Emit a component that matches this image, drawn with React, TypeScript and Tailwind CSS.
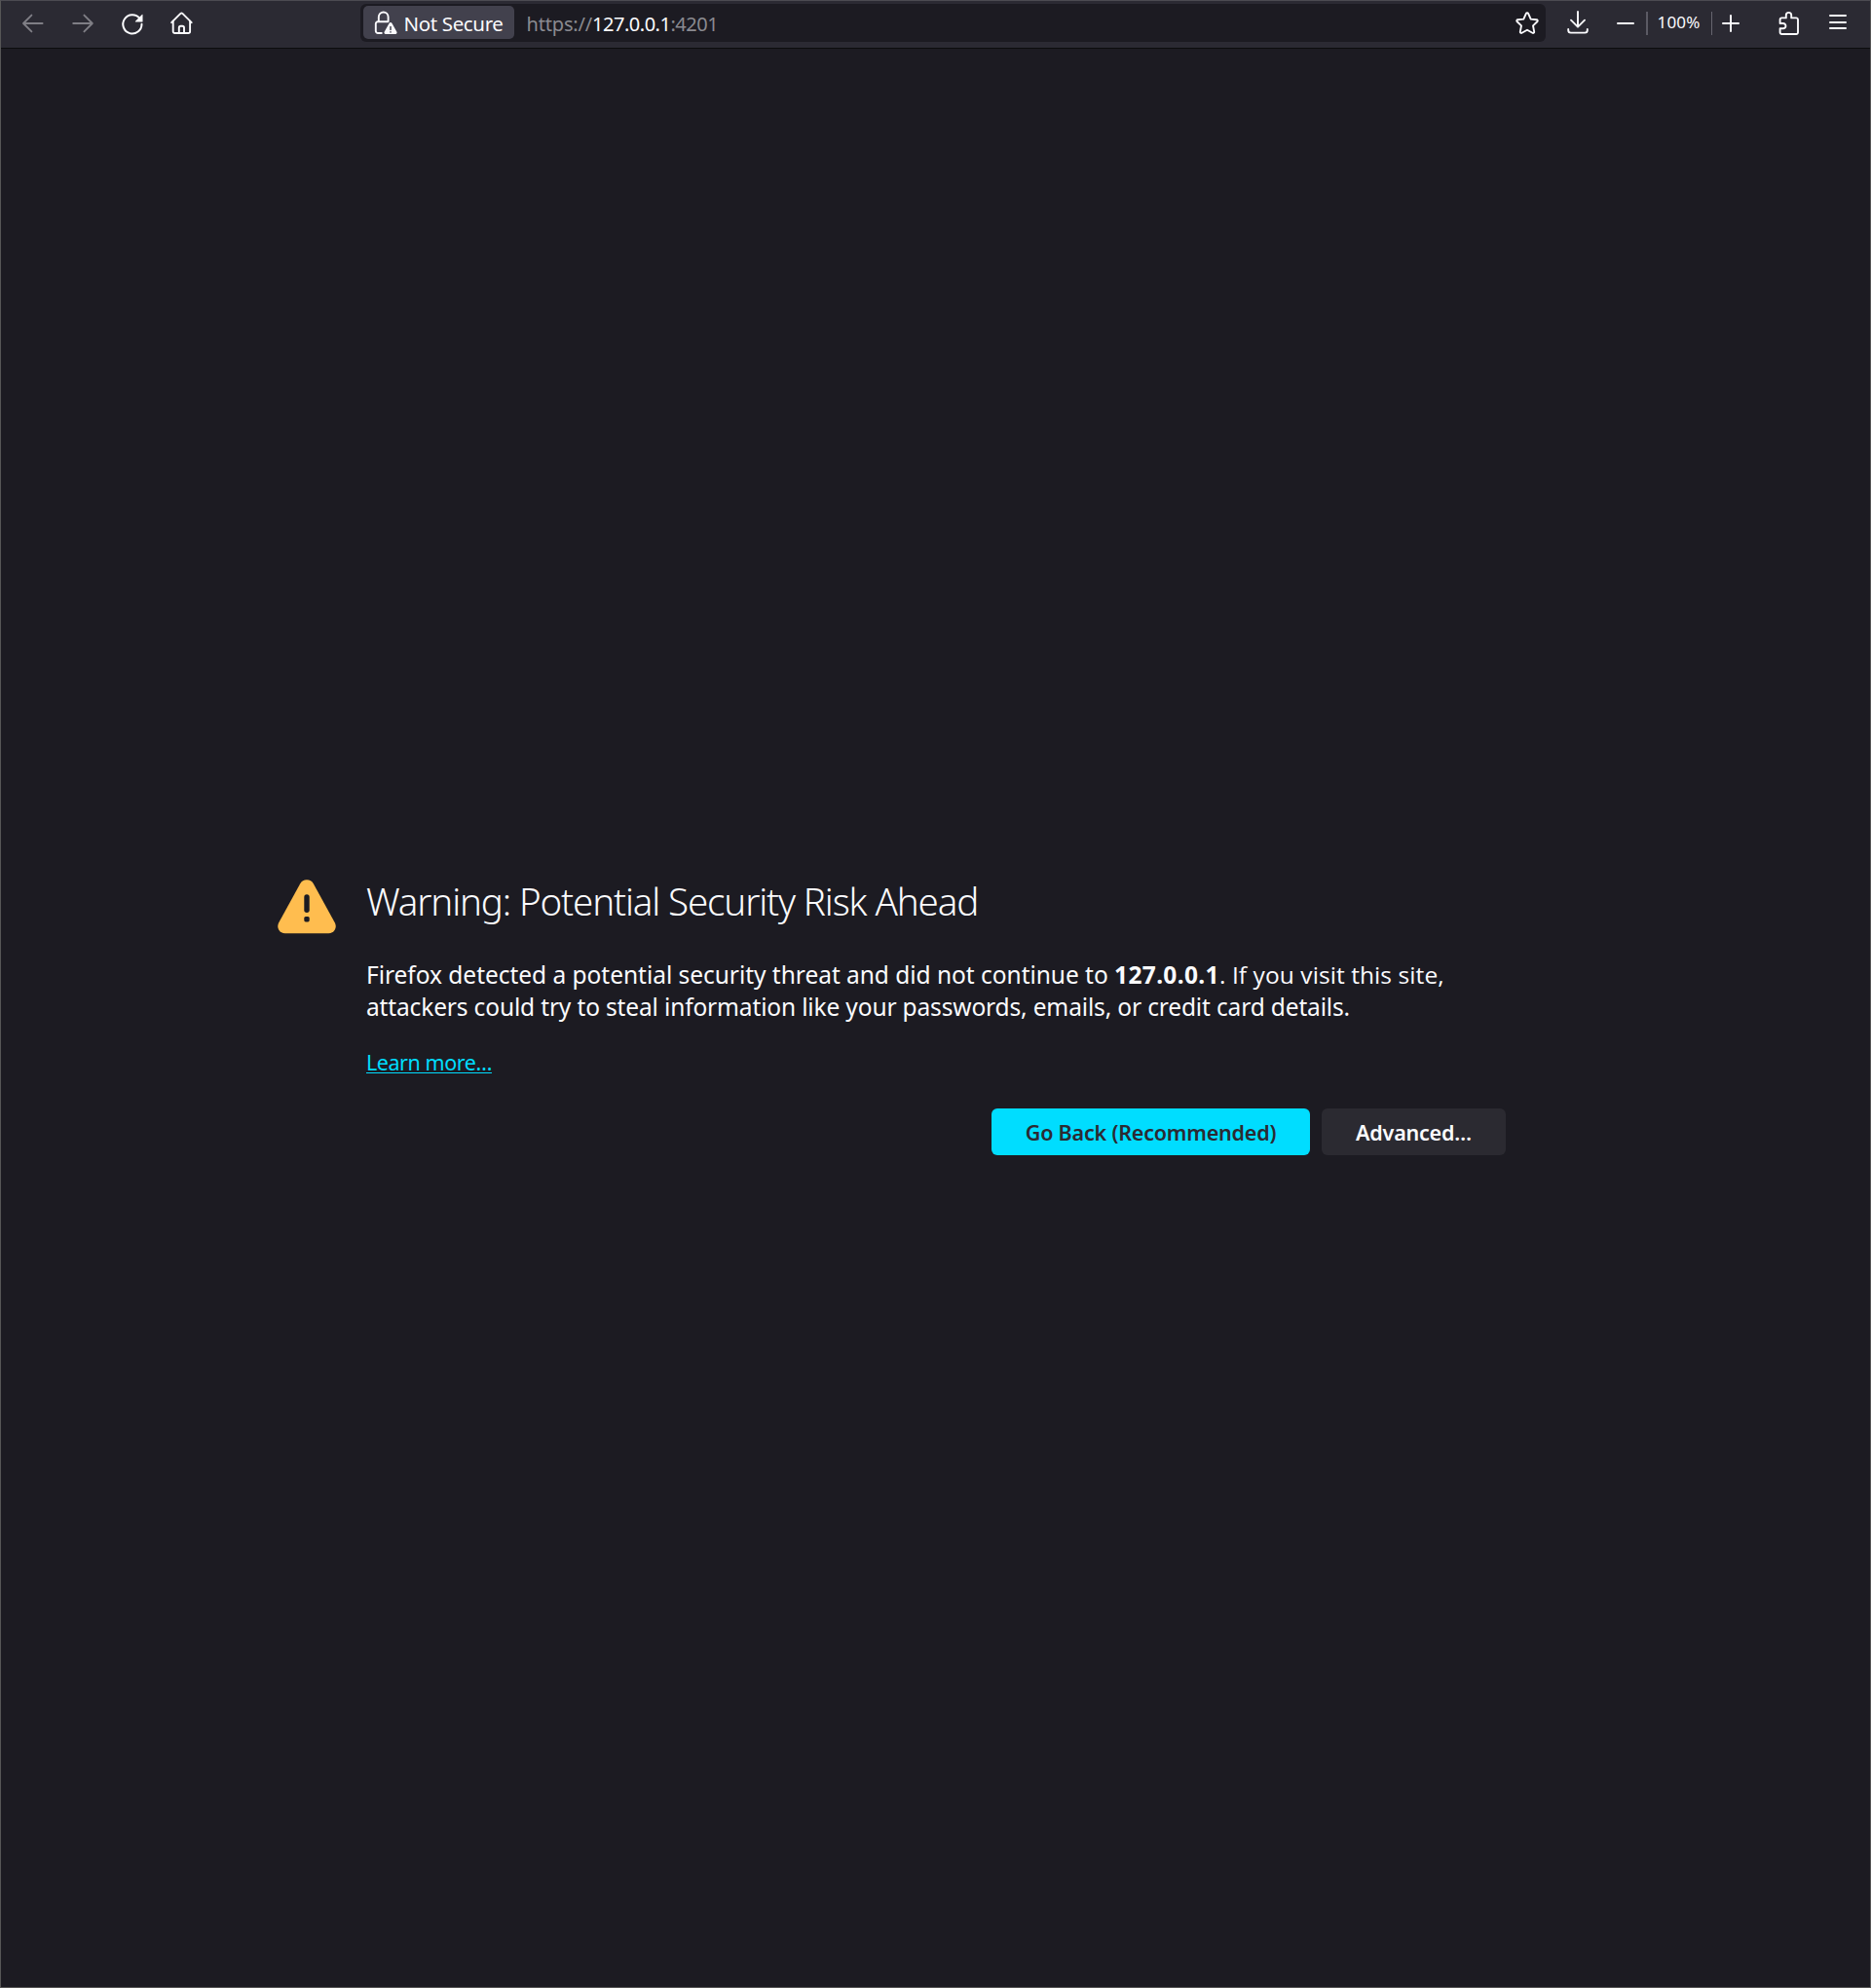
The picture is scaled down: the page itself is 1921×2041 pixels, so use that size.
import type { ReactNode } from "react";

function Icon({ children, className = "" }: { children: ReactNode; className?: string }) {
  return (
    <svg
      viewBox="0 0 24 24"
      className={`size-6 shrink-0 overflow-visible ${className}`}
      fill="none"
      stroke="currentColor"
      strokeWidth={1.9}
      strokeLinecap="round"
      strokeLinejoin="round"
    >
      {children}
    </svg>
  );
}

function BackIcon() {
  return (
    <Icon className="text-[#7f7e85]">
      <path d="M21.6 12H2.2M10.4 3.6 2 12l8.4 8.4" />
    </Icon>
  );
}

function ForwardIcon() {
  return (
    <Icon className="text-[#7f7e85]">
      <path d="M2.2 12h19.4M13.4 3.6l8.4 8.4-8.4 8.4" />
    </Icon>
  );
}

function ReloadIcon() {
  return (
    <Icon>
      <path d="M19.4 6.9A9.6 9.6 0 1 0 21.5 12.8" strokeWidth={2} />
      <path d="M22.5 3.2v6.7a.5.5 0 0 1-.5.5h-6.7a.4.4 0 0 1-.3-.7l6.8-6.8a.4.4 0 0 1 .7.3z" fill="currentColor" stroke="none" />
    </Icon>
  );
}

function HomeIcon() {
  return (
    <Icon>
      <path d="M1.1 11.2 10.4 1.9a1.45 1.45 0 0 1 2 0l9.3 9.3" />
      <path d="M2.7 9.8v10.4A1.8 1.8 0 0 0 4.5 22h13.8a1.8 1.8 0 0 0 1.8-1.8V9.8" />
      <path d="M8.8 21.8v-5.2a1.8 1.8 0 0 1 1.8-1.8h1.6a1.8 1.8 0 0 1 1.8 1.8v5.2" />
    </Icon>
  );
}

function InsecureLockIcon() {
  return (
    <Icon>
      <path d="M4.8 11V6.4a4.9 4.9 0 0 1 9.8 0V11" />
      <path d="M7.8 23H4a2.2 2.2 0 0 1-2.2-2.2v-7.3A2.2 2.2 0 0 1 4 11.3h10.2" />
      <path
        d="M15.5 12.9a1.7 1.7 0 0 1 3 0l4.9 8.9a1.5 1.5 0 0 1-1.3 2.2H11.9a1.5 1.5 0 0 1-1.3-2.2z"
        fill="currentColor"
        stroke="none"
      />
      <path d="M17 16.4v3M17 21.8v.1" stroke="#42414d" strokeWidth={1.5} />
    </Icon>
  );
}

function StarIcon() {
  return (
    <Icon>
      <path d="M10.9 1.9a1.2 1.2 0 0 1 2.2 0l2.6 5.7 5.9.7a1.1 1.1 0 0 1 .7 2l-4.3 4.1 1.2 6.2a1.2 1.2 0 0 1-1.8 1.2L12 18.7l-5.4 3.1a1.2 1.2 0 0 1-1.8-1.2L6 14.4l-4.3-4.1a1.1 1.1 0 0 1 .7-2l5.9-.7z" />
    </Icon>
  );
}

function DownloadIcon() {
  return (
    <Icon>
      <path d="M12 0v15.4M5 8.7l7 7 7-7" />
      <path d="M2.2 18v1a2.6 2.6 0 0 0 2.6 2.6h14.4a2.6 2.6 0 0 0 2.6-2.6v-1" />
    </Icon>
  );
}

function PuzzleIcon() {
  return (
    <Icon>
      <path d="M2.6 12h3.2a2.6 2.6 0 1 1 0 5.3H2.6v3.9A1.8 1.8 0 0 0 4.4 23h14.8a1.8 1.8 0 0 0 1.8-1.8V8.2a1.8 1.8 0 0 0-1.8-1.8h-5V3.6a2.7 2.7 0 0 0-5.4 0v2.8H4.4a1.8 1.8 0 0 0-1.8 1.8z" />
    </Icon>
  );
}

function WarningIcon() {
  return (
    <svg viewBox="0 0 60 56" className="h-14 w-[60px] shrink-0">
      <path
        d="M23.2 4.2a7.8 7.8 0 0 1 13.6 0l22.1 40.3A7.4 7.4 0 0 1 52.4 55.3H7.6A7.4 7.4 0 0 1 1.1 44.5z"
        fill="#ffbd4f"
      />
      <rect x="27.3" y="15.2" width="5.4" height="18.8" rx="2.7" fill="#1c1b22" />
      <rect x="27.3" y="38" width="5.4" height="5.4" rx="1.6" fill="#1c1b22" />
    </svg>
  );
}

function Toolbar() {
  return (
    <header className="h-[49px] shrink-0 border-b border-[#0c0c0d] bg-[#2b2a33] text-[#fbfbfe]">
      <div className="flex h-[46px] items-center">
        <nav className="flex items-center gap-[27px] pl-[21px]">
          <BackIcon />
          <ForwardIcon />
          <ReloadIcon />
          <HomeIcon />
        </nav>

        <div className="mt-[3px] ml-[171px] flex h-[39px] w-[1217px] items-center self-start rounded-md bg-[#1c1b22] pr-[7px] pl-[3px]">
          <div className="-mt-px flex h-[34px] w-[155px] items-center rounded-[5px] bg-[#42414d] pl-[11px]">
            <InsecureLockIcon />
            <span className="mt-[3px] ml-[6.5px] text-[20.5px] tracking-[-0.36px] whitespace-nowrap">Not Secure</span>
          </div>
          <div className="mt-[2px] ml-[12.5px] flex-1 text-[20px] whitespace-nowrap text-[#8a8a90]">
            <span className="tracking-[-0.18px]">https://</span>
            <span className="tracking-[-0.47px] text-[#fbfbfe]">127.0.0.1</span>
            <span className="tracking-[-0.5px]">:4201</span>
          </div>
          <StarIcon />
        </div>

        <div className="ml-[21px]">
          <DownloadIcon />
        </div>

        <div className="ml-7 flex items-center">
          <div className="h-0.5 w-[18px] rounded-full bg-[#fbfbfe]" />
          <div className="ml-3 h-6 w-0.5 bg-[#5b5a64]" />
          <span className="-mt-[3px] w-[66px] pl-[9.5px] text-[17px] tracking-[0.2px]">100%</span>
          <div className="-ml-px h-6 w-px bg-[#66656f]" />
          <svg viewBox="0 0 18 18" className="ml-[10px] size-[18px]" fill="none" stroke="currentColor" strokeWidth={2} strokeLinecap="round">
            <path d="M9 1v16M1 9h16" />
          </svg>
        </div>

        <div className="ml-[39px]">
          <PuzzleIcon />
        </div>
        <div className="mb-[3px] ml-[29px] flex flex-col gap-[4.5px]">
          <div className="h-0.5 w-[18px] rounded-full bg-[#fbfbfe]" />
          <div className="h-0.5 w-[18px] rounded-full bg-[#fbfbfe]" />
          <div className="h-0.5 w-[18px] rounded-full bg-[#fbfbfe]" />
        </div>
      </div>
    </header>
  );
}

export default function App() {
  return (
    <div className="flex h-[2041px] w-[1921px] flex-col border border-t-[#4c4b52] border-r-[#565656] border-b-[#565656] border-l-[#565656] bg-[#1c1b22] font-['Noto_Sans','Open_Sans',sans-serif] text-[#fbfbfe]">
      <Toolbar />
      <main className="flex flex-1 items-start pt-[850px] pl-[284px]">
        <div className="pt-[3px]">
          <WarningIcon />
        </div>
        <div className="ml-[31px] w-[1170px]">
          <h1 className="pt-px text-[38.5px] leading-[48px] font-light tracking-[-1.12px] whitespace-nowrap">
            Warning: Potential Security Risk Ahead
          </h1>
          <p className="mt-[35px] text-[24.5px] leading-[33px] whitespace-nowrap">
            <span className="tracking-[-0.03px]">Firefox detected a potential security threat and did not continue to </span>
            <b className="font-bold tracking-[0.35px]">127.0.0.1</b>
            <span className="font-['Open_Sans'] tracking-[0.08px]">. If you visit this site,</span>
            <br />
            <span className="tracking-[-0.147px]">
              attackers could try to steal information like your passwords, emails, or credit card details.
            </span>
          </p>
          <div className="mt-6 text-[21.5px] leading-[33px]">
            <a href="#" className="tracking-[-0.45px] text-[#00ddff] underline decoration-1 underline-offset-2">
              Learn more…
            </a>
          </div>
          <div className="mt-[31px] flex justify-end gap-3 text-[21.5px] font-semibold tracking-[-0.2px]">
            <button className="h-12 w-[327px] rounded-md bg-[#00ddff] pt-[2px] text-[#2b2a33]">Go Back (Recommended)</button>
            <button className="h-12 w-[189px] rounded-md bg-[#2b2a31] pt-[2px]">Advanced…</button>
          </div>
        </div>
      </main>
    </div>
  );
}
